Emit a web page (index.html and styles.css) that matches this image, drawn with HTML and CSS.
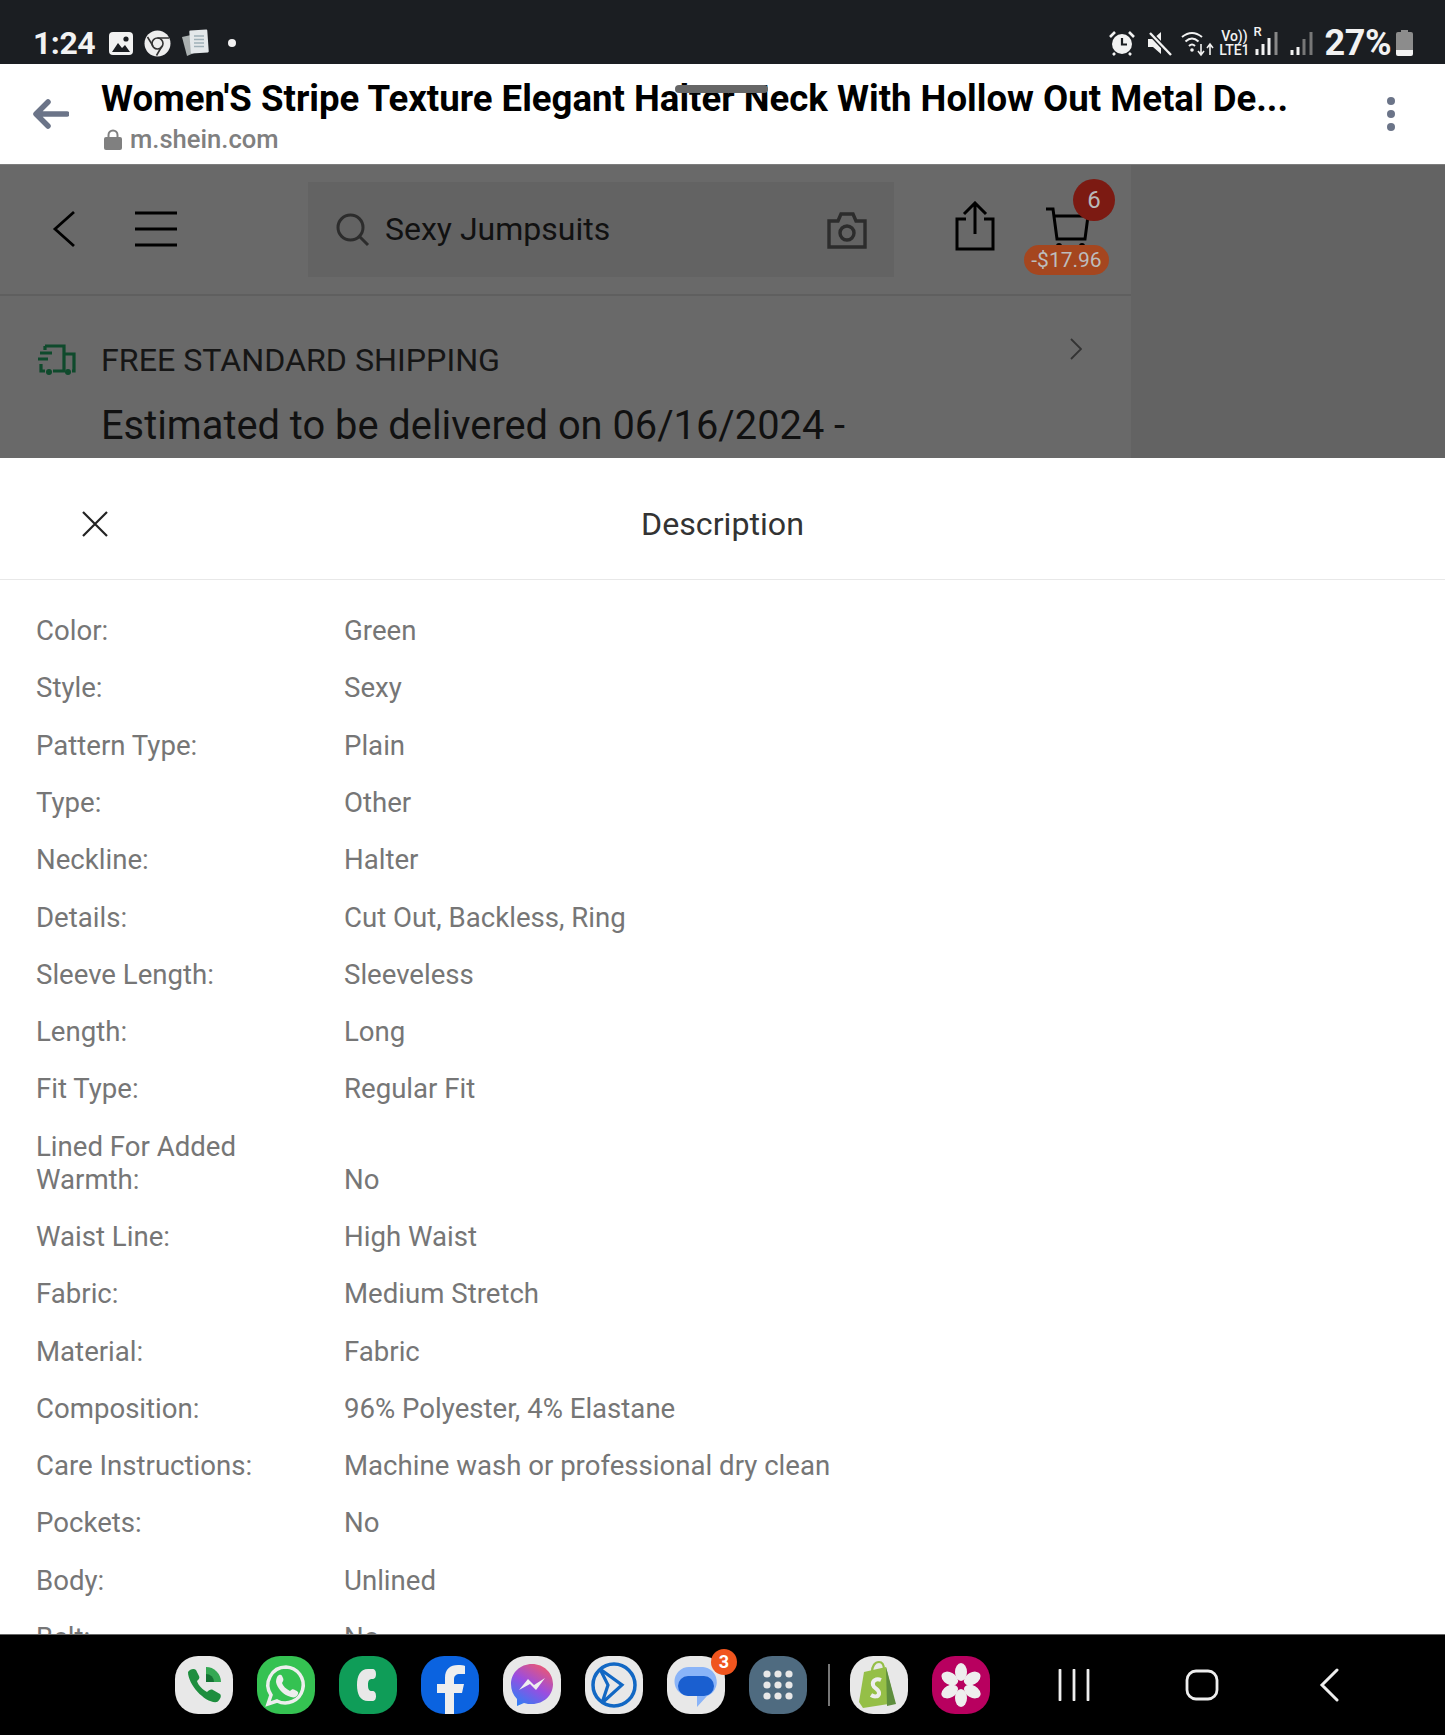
FILE: index.html
```html
<!DOCTYPE html>
<html lang="en">

<head>
    <meta charset="UTF-8">
    <meta name="viewport" content="width=device-width, initial-scale=1.0">
    <title>Description</title>
    <link rel="stylesheet" href="styles.css">
</head>

<body>
    <div id="screen">
        <!-- status bar -->
        <div class="status">
            <span class="clock">1:24</span>
            <svg class="st-icon" width="26" height="25" viewBox="0 0 26 25"><rect x="1" y="1" width="24" height="23" rx="4" fill="#f2f2f2"/><circle cx="18" cy="8" r="2.6" fill="#1b1e22"/><path d="M4 21l6-9 4 5 3-3 5 7z" fill="#1b1e22"/></svg>
            <svg class="st-icon" width="27" height="27" viewBox="0 0 27 27"><circle cx="13.5" cy="13.5" r="13" fill="#eee"/><circle cx="13.5" cy="13.5" r="5.5" fill="none" stroke="#333" stroke-width="1.6"/><path d="M13.5 8H25M9 16L3.5 7M18 16l-5.500 9.500" stroke="#333" stroke-width="1.6" fill="none"/></svg>
            <svg class="st-icon" width="28" height="28" viewBox="0 0 28 28"><path d="M1 8l9-2 3 18-7 3z" fill="#aab0b0"/><rect x="9" y="1" width="18" height="23" rx="1" fill="#e4e8ea" transform="rotate(-4 18 12)"/><path d="M13 7h10M13 10.500h10M13 14h10M13 17.500h10" stroke="#9fb0b8" stroke-width="1.500"/></svg>
            <span class="st-dot"></span>
            <div class="status-right">
                <svg class="st-alarm" width="26" height="26" viewBox="0 0 26 26"><circle cx="13" cy="14" r="10" fill="#f2f2f2"/><path d="M13 8v6.500h5" stroke="#1b1e22" stroke-width="2.200" fill="none"/><path d="M1 7l5-5M25 7l-5-5M6 23l-2 2M20 23l2 2" stroke="#f2f2f2" stroke-width="2.600"/></svg>
                <svg width="26" height="26" viewBox="0 0 26 26"><path d="M2 9h5l8-7v22l-8-7H2z" fill="#f2f2f2"/><path d="M3 2l21 22" stroke="#1b1e22" stroke-width="5"/><path d="M4 3l21 22" stroke="#f2f2f2" stroke-width="2.400"/></svg>
                <svg width="34" height="28" viewBox="0 0 34 28"><path d="M1 8q10-8 20 0M4.500 12.500q6.500-6 13 0M8 17q3-3 6 0" stroke="#f2f2f2" stroke-width="2" fill="none"/><circle cx="11" cy="21" r="1.800" fill="#f2f2f2"/><path d="M20 15v11M17 22l3 4 3-4M29 26V15M26 19l3-4 3 4" stroke="#f2f2f2" stroke-width="1.600" fill="none"/></svg>
                <div class="st-volte"><span>Vo))</span><span>LTE1</span></div>
                <div class="st-signal">
                    <span class="st-r">R</span>
                    <svg width="25" height="24" viewBox="0 0 25 24"><path d="M2 24v-6M8 24V13M14 24V7" stroke="#f2f2f2" stroke-width="3"/><path d="M21 24V1" stroke="#888" stroke-width="3"/></svg>
                </div>
                <svg class="st-signal2" width="24" height="24" viewBox="0 0 24 24"><path d="M2 24v-5M8 24v-8" stroke="#f2f2f2" stroke-width="3"/><path d="M14 24V8M21 24V1" stroke="#777" stroke-width="3"/></svg>
                <span class="st-pct">27%</span>
                <svg class="st-batt" width="17" height="26" viewBox="0 0 17 26"><path d="M5 2V0h7v2h3a2 2 0 0 1 2 2v16H0V4a2 2 0 0 1 2-2z" fill="#8c8c8c"/><path d="M0 20h17v4a2 2 0 0 1-2 2H2a2 2 0 0 1-2-2z" fill="#f2f2f2"/></svg>
            </div>
        </div>

        <!-- in app browser bar -->
        <div class="browser">
            <svg class="br-back" width="36" height="30" viewBox="0 0 36 30"><path d="M15 3L3 15l12 12M4 15h30" stroke="#6b7488" stroke-width="5.500" stroke-linecap="round" stroke-linejoin="round" fill="none"/></svg>
            <div class="br-text">
                <div class="br-title">Women'S Stripe Texture Elegant Halter Neck With Hollow Out Metal De...</div>
                <div class="br-url">
                    <svg width="18" height="21" viewBox="0 0 18 21"><path d="M4.500 9V6a4.500 4.500 0 0 1 9 0v3" stroke="#808080" stroke-width="2" fill="none"/><rect y="8" width="18" height="13" rx="2" fill="#808080"/></svg>
                    <span>m.shein.com</span>
                </div>
            </div>
            <svg class="br-more" width="10" height="36" viewBox="0 0 10 36"><circle cx="5" cy="5" r="4" fill="#6b7488"/><circle cx="5" cy="18" r="4" fill="#6b7488"/><circle cx="5" cy="31" r="4" fill="#6b7488"/></svg>
            <span class="handle"></span>
        </div>

        <!-- page behind the sheet -->
        <div class="behind">
            <div class="page">
                <div class="nav">
                    <svg class="nav-back" width="24" height="38" viewBox="0 0 24 38"><path d="M22 2L3 19l19 17" stroke="#000" stroke-width="2.800" fill="none"/></svg>
                    <svg class="nav-menu" width="42" height="36" viewBox="0 0 42 36"><path d="M0 2h42M0 18h42M0 34h42" stroke="#000" stroke-width="3"/></svg>
                    <div class="search">
                        <svg width="34" height="34" viewBox="0 0 34 34"><circle cx="14.500" cy="14.500" r="12.500" stroke="#2c2c2c" stroke-width="3" fill="none"/><path d="M24 24l8 8" stroke="#2c2c2c" stroke-width="3"/></svg>
                        <span class="search-text">Sexy Jumpsuits</span>
                        <svg class="camera" width="40" height="38" viewBox="0 0 40 38"><path d="M2 10h9l3-7h12l3 7h9v26H2z" stroke="#2c2c2c" stroke-width="3.400" fill="none"/><circle cx="20" cy="22" r="7" stroke="#2c2c2c" stroke-width="3.400" fill="none"/></svg>
                    </div>
                    <svg class="share" width="40" height="50" viewBox="0 0 40 50"><path d="M20 33V3M9 13L20 2l11 11M11 18H2v30h36V18h-9" stroke="#000" stroke-width="3" fill="none"/></svg>
                    <div class="cart">
                        <svg width="46" height="44" viewBox="0 0 46 44"><path d="M1 2h7l4 30h28l3-23H9" stroke="#000" stroke-width="3" fill="none"/><circle cx="14" cy="39" r="3" fill="#000"/><circle cx="37" cy="39" r="3" fill="#000"/></svg>
                        <span class="cart-count">6</span>
                        <span class="cart-price">-$17.96</span>
                    </div>
                </div>
                <div class="ship">
                    <div class="ship-line">
                        <svg width="38" height="32" viewBox="0 0 38 32"><path d="M7 2h19v25H15M7 27H3V20M2 9h12M0 15h10M7 2v4M26 10h10v17h-2M26 27h-4" stroke="#0f4a2c" stroke-width="3.200" fill="none"/><circle cx="11" cy="28" r="3" fill="#0f4a2c"/><circle cx="30" cy="28" r="3" fill="#0f4a2c"/></svg>
                        <span class="ship-title">FREE STANDARD SHIPPING</span>
                        <svg class="ship-arrow" width="12" height="22" viewBox="0 0 12 22"><path d="M1 1l10 10L1 21" stroke="#333" stroke-width="1.800" fill="none"/></svg>
                    </div>
                    <div class="ship-date">Estimated to be delivered on 06/16/2024 -</div>
                </div>
            </div>
        </div>

        <!-- description sheet -->
        <div class="sheet">
            <div class="sheet-head">
                <svg class="sheet-close" width="28" height="28" viewBox="0 0 28 28"><path d="M2 2l24 24M26 2L2 26" stroke="#222" stroke-width="2.200"/></svg>
                <span>Description</span>
            </div>
            <div class="rows">
                <div class="row"><div class="key">Color:</div><div class="val">Green</div></div>
                <div class="row"><div class="key">Style:</div><div class="val">Sexy</div></div>
                <div class="row"><div class="key">Pattern Type:</div><div class="val">Plain</div></div>
                <div class="row"><div class="key">Type:</div><div class="val">Other</div></div>
                <div class="row"><div class="key">Neckline:</div><div class="val">Halter</div></div>
                <div class="row"><div class="key">Details:</div><div class="val">Cut Out, Backless, Ring</div></div>
                <div class="row"><div class="key">Sleeve Length:</div><div class="val">Sleeveless</div></div>
                <div class="row"><div class="key">Length:</div><div class="val">Long</div></div>
                <div class="row"><div class="key">Fit Type:</div><div class="val">Regular Fit</div></div>
                <div class="row"><div class="key">Lined For Added Warmth:</div><div class="val">No</div></div>
                <div class="row"><div class="key">Waist Line:</div><div class="val">High Waist</div></div>
                <div class="row"><div class="key">Fabric:</div><div class="val">Medium Stretch</div></div>
                <div class="row"><div class="key">Material:</div><div class="val">Fabric</div></div>
                <div class="row"><div class="key">Composition:</div><div class="val">96% Polyester, 4% Elastane</div></div>
                <div class="row"><div class="key">Care Instructions:</div><div class="val">Machine wash or professional dry clean</div></div>
                <div class="row"><div class="key">Pockets:</div><div class="val">No</div></div>
                <div class="row"><div class="key">Body:</div><div class="val">Unlined</div></div>
                <div class="row"><div class="key">Belt:</div><div class="val">No</div></div>
            </div>
        </div>

        <!-- samsung taskbar -->
        <div class="dock">
            <div class="app app-light">
                <svg width="58" height="58" viewBox="0 0 58 58"><path d="M13 16c2-3 6-4 8-2l3 6c1 2 0 3-2 5 1 4 6 9 10 11 2-2 4-3 6-2l7 4c2 2 0 6-3 8-11 2-29-17-29-30z" fill="#1e8e3e"/><path d="M31 11a15 15 0 0 1 15 15H31z" fill="#34a853"/><path d="M31 18a8 8 0 0 1 8 8h-8z" fill="#137333"/></svg>
            </div>
            <div class="app app-whatsapp">
                <svg width="58" height="58" viewBox="0 0 58 58"><path d="M29 11a18 18 0 0 0-15 28l-3 9 9-3a18 18 0 1 0 9-34z" fill="none" stroke="#eee" stroke-width="3.500"/><path d="M22 19c2-1 3 0 4 3 1 2 0 3-1 5 1 3 4 6 8 8 2-2 3-2 5-1s4 2 3 4c-1 3-4 4-7 3-8-2-14-9-15-15 0-3 1-6 3-7z" fill="#eee"/></svg>
            </div>
            <div class="app app-cgreen">
                <svg width="58" height="58" viewBox="0 0 58 58"><path d="M33 13h-4c-8 0-11 7-11 16s3 16 11 16h4c3 0 4-2 4-5s-1-5-4-5c-3 0-4-2-4-6s1-6 4-6c3 0 4-2 4-5s-1-5-4-5z" fill="#e8e8e8"/></svg>
            </div>
            <div class="app app-facebook">
                <svg width="58" height="58" viewBox="0 0 58 58"><path d="M24 58V37h-8v-9h8v-6c0-9 5-13 13-13 3 0 6 0 7 1v8h-5c-4 0-6 2-6 5v5h10l-2 9h-8v21z" fill="#eee"/></svg>
            </div>
            <div class="app app-light">
                <svg width="58" height="58" viewBox="0 0 58 58"><defs><linearGradient id="msg" x1="0.200" y1="1" x2="0.800" y2="0"><stop offset="0" stop-color="#2f7ff5"/><stop offset="0.500" stop-color="#9a4de0"/><stop offset="1" stop-color="#f0586c"/></linearGradient></defs><path d="M29 8c-12 0-21 9-21 20 0 6 2 11 6 15v7l7-3c3 1 5 1 8 1 12 0 21-9 21-20S41 8 29 8z" fill="url(#msg)"/><path d="M16 34l9-11 6 6 11-7-9 12-6-6z" fill="#eee"/></svg>
            </div>
            <div class="app app-light">
                <svg width="58" height="58" viewBox="0 0 58 58"><circle cx="29" cy="29" r="21" fill="none" stroke="#1268c4" stroke-width="3.500"/><path d="M15 13l22 16-20 18M15 13l8 16-6 18" fill="none" stroke="#1268c4" stroke-width="3.200"/></svg>
            </div>
            <div class="app app-light app-msgs">
                <svg width="58" height="58" viewBox="0 0 58 58"><path d="M22 11h14a15 15 0 0 1 4 29l-10 11V40h-8a14.500 14.500 0 0 1 0-29z" fill="#8ab4f8"/><rect x="11" y="20" width="36" height="20" rx="10" fill="#1a5fd0"/></svg>
                <span class="app-badge">3</span>
            </div>
            <div class="app app-apps">
                <svg width="58" height="58" viewBox="0 0 58 58"><g fill="#e8e8e8"><circle cx="18" cy="18" r="3.600"/><circle cx="29" cy="18" r="3.600"/><circle cx="40" cy="18" r="3.600"/><circle cx="18" cy="29" r="3.600"/><circle cx="29" cy="29" r="3.600"/><circle cx="40" cy="29" r="3.600"/><circle cx="18" cy="40" r="3.600"/><circle cx="29" cy="40" r="3.600"/><circle cx="40" cy="40" r="3.600"/></g></svg>
            </div>
            <span class="dock-sep"></span>
            <div class="app app-light">
                <svg width="58" height="58" viewBox="0 0 58 58"><path d="M14 16l22-5 9 36-32 5-4-6z" fill="#95bf47"/><path d="M36 11l10 37-9 2z" fill="#5e8e3e"/><path d="M22 16c0-6 3-10 7-10s5 4 5 8" fill="none" stroke="#95bf47" stroke-width="2.200"/><path d="M31 24c-5-2-9 1-8 5s7 4 6 9c-1 3-5 3-8 1" fill="none" stroke="#eee" stroke-width="4"/></svg>
            </div>
            <div class="app app-flower">
                <svg width="58" height="58" viewBox="0 0 58 58"><g fill="#eee"><ellipse cx="29" cy="16" rx="6" ry="9"/><ellipse cx="29" cy="42" rx="6" ry="9"/><ellipse cx="29" cy="16" rx="6" ry="9" transform="rotate(60 29 29)"/><ellipse cx="29" cy="16" rx="6" ry="9" transform="rotate(120 29 29)"/><ellipse cx="29" cy="16" rx="6" ry="9" transform="rotate(240 29 29)"/><ellipse cx="29" cy="16" rx="6" ry="9" transform="rotate(300 29 29)"/></g><circle cx="29" cy="29" r="3.500" fill="#b8005f"/></svg>
            </div>
            <div class="softkeys">
                <svg width="34" height="32" viewBox="0 0 34 32"><path d="M3 1v30M17 1v30M31 1v30" stroke="#eee" stroke-width="2.800" stroke-linecap="round"/></svg>
                <svg width="34" height="32" viewBox="0 0 34 32"><rect x="2" y="2" width="30" height="28" rx="9" fill="none" stroke="#eee" stroke-width="2.800"/></svg>
                <svg class="key-back" width="20" height="34" viewBox="0 0 20 34"><path d="M18 2L3 17l15 15" fill="none" stroke="#eee" stroke-width="3" stroke-linecap="round"/></svg>
            </div>
        </div>
    </div>
</body>

</html>
```

FILE: styles.css
```css
* {
    box-sizing: border-box;
}

html,
body {
    margin: 0;
    padding: 0;
}

body {
    font-family: Roboto, "Liberation Sans", sans-serif;
    background-color: #fff;
}

svg {
    display: block;
    flex: none;
}

#screen {
    width: 1445px;
    height: 1735px;
    display: flex;
    flex-direction: column;
    overflow: hidden;
}

/* status bar */
.status {
    height: 64px;
    flex: none;
    display: flex;
    align-items: center;
    padding: 22px 32px 0 33px;
    background-color: #1b1e22;
    color: #f2f2f2;
}

.clock {
    font-size: 32px;
    font-weight: 700;
    letter-spacing: -0.5px;
    width: 75px;
}

.st-icon {
    margin-right: 10px;
}

.st-dot {
    width: 8px;
    height: 8px;
    margin-left: 9px;
    border-radius: 50%;
    background-color: #f2f2f2;
}

.status-right {
    margin-left: auto;
    display: flex;
    align-items: center;
    gap: 9px;
}

.st-alarm {
    margin-right: 2px;
}

.st-volte {
    display: flex;
    flex-direction: column;
    align-items: center;
    margin: 0 -8px 0 -5px;
    font-size: 14px;
    line-height: 14px;
    font-weight: 500;
}

.st-signal {
    position: relative;
    margin-left: 4px;
}

.st-r {
    position: absolute;
    left: -1px;
    top: -7px;
    font-size: 13px;
    font-weight: 500;
}

.st-signal2 {
    margin-left: 1px;
}

.st-pct {
    font-size: 36px;
    font-weight: 700;
    letter-spacing: -0.5px;
    margin-left: 2px;
}

.st-batt {
    margin-left: -4px;
}

/* browser bar */
.browser {
    height: 100px;
    flex: none;
    position: relative;
    display: flex;
    align-items: center;
    padding: 6px 49px 0 33px;
    background-color: #fff;
}

.br-back {
    margin-right: 32px;
    margin-top: -6px;
}

.br-text {
    flex: 1;
}

.br-title {
    font-size: 36.6px;
    font-weight: 700;
    line-height: 44px;
    color: #000;
    white-space: nowrap;
}

.br-url {
    display: flex;
    align-items: center;
    gap: 8px;
    margin-left: 3px;
    font-size: 25.6px;
    line-height: 36px;
    font-weight: 500;
    color: #808080;
}

.br-more {
    margin-top: -6px;
}

.handle {
    position: absolute;
    left: 675px;
    top: 21px;
    width: 93px;
    height: 8px;
    border-radius: 4px;
    background-color: #666;
}

/* dimmed page behind the sheet */
.behind {
    height: 294px;
    flex: none;
    overflow: hidden;
    background-color: #636363;
    border-top: 1px solid #7d7d7d;
}

.page {
    width: 1131px;
    height: 100%;
    background-color: #696969;
}

.nav {
    height: 131px;
    display: flex;
    align-items: center;
    padding-left: 52px;
    border-bottom: 2px solid #5f5f5f;
}

.nav-back {
    margin-top: -2px;
}

.nav-menu {
    margin-left: 59px;
    margin-top: -2px;
}

.search {
    width: 586px;
    height: 95px;
    margin-left: 131px;
    display: flex;
    align-items: center;
    padding: 0 28px;
    background-color: #636363;
}

.search-text {
    margin-left: 15px;
    margin-top: -2px;
    font-size: 32px;
    color: #111;
}

.camera {
    margin-left: auto;
    margin-right: -1px;
}

.share {
    margin-left: 61px;
    margin-top: -7px;
}

.cart {
    position: relative;
    margin-left: 50px;
    margin-top: -2px;
}

.cart-count {
    position: absolute;
    left: 28px;
    top: -28px;
    width: 42px;
    height: 42px;
    border-radius: 50%;
    background-color: #7c1a12;
    color: #b9b9b9;
    font-size: 24px;
    line-height: 42px;
    text-align: center;
}

.cart-price {
    position: absolute;
    left: -21px;
    top: 38px;
    width: 85px;
    height: 30px;
    border-radius: 15px;
    background-color: #a5461f;
    color: #bdbdbd;
    font-size: 21px;
    line-height: 30px;
    text-align: center;
}

.ship {
    padding: 46px 0 0 38px;
}

.ship-line {
    display: flex;
    align-items: center;
    height: 36px;
}

.ship-title {
    margin-left: 25px;
    font-size: 32.2px;
    color: #161616;
}

.ship-arrow {
    margin-left: auto;
    margin-right: 49px;
    margin-top: -22px;
}

.ship-date {
    margin: 24px 0 0 63px;
    font-size: 39.8px;
    line-height: 48px;
    color: #111;
    white-space: nowrap;
}

/* description sheet */
.sheet {
    flex: 1;
    min-height: 0;
    overflow: hidden;
    background-color: #fff;
}

.sheet-head {
    position: relative;
    height: 122px;
    display: flex;
    align-items: center;
    justify-content: center;
    padding-top: 10px;
    border-bottom: 1px solid #e8e8e8;
    font-size: 32.2px;
    color: #333;
}

.sheet-close {
    position: absolute;
    left: 81px;
    top: 52px;
}

.rows {
    padding: 22px 36px 0;
}

.row {
    display: flex;
    align-items: flex-end;
    padding: 12.15px 0;
    font-size: 27.6px;
    line-height: 33px;
    color: #767676;
}

.key {
    width: 308px;
    padding-right: 40px;
    flex: none;
}

/* taskbar */
.dock {
    height: 101px;
    flex: none;
    display: flex;
    align-items: center;
    padding-left: 175px;
    background-color: #000;
    border-top: 1px solid #666;
}

.app {
    position: relative;
    width: 58px;
    height: 58px;
    margin-right: 24px;
    border-radius: 40%;
    overflow: hidden;
}

.app-msgs {
    overflow: visible;
}

.app-light {
    background-color: #e8e8e8;
}

.app-whatsapp {
    background-color: #35c252;
}

.app-cgreen {
    background-color: #0f9d58;
}

.app-facebook {
    background-color: #0b63e0;
}

.app-apps {
    background-color: #4f6b80;
}

.app-flower {
    background-color: #b8005f;
    margin-right: 0;
}

.app-badge {
    position: absolute;
    right: -12px;
    top: -7px;
    width: 26px;
    height: 26px;
    border-radius: 50%;
    background-color: #f0551e;
    color: #fff;
    font-size: 18px;
    font-weight: 700;
    line-height: 26px;
    text-align: center;
}

.dock-sep {
    width: 2px;
    height: 42px;
    margin: 0 20px 0 -3px;
    background-color: #777;
}

.softkeys {
    display: flex;
    align-items: center;
    margin-left: 67px;
    gap: 94px;
}

.key-back {
    margin-left: 6px;
}
```
